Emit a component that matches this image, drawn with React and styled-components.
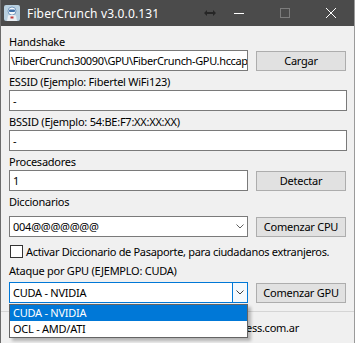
import React from 'react';
import styled, { createGlobalStyle, css } from 'styled-components';

const GlobalStyle = createGlobalStyle`
 html, body {
  margin: 0;
  padding: 0;
  background: #f0f0f0;
 }
 * { box-sizing: border-box; }
`

const Window = styled.div`
 width: 355px;
 height: 343px;
 overflow: hidden;
 background: #f0f0f0;
 border-left: 1px solid #6b6b6b;
 border-right: 1px solid #9a9a9a;
 display: flex;
 flex-direction: column;
 font-family: "Noto Sans", "Open Sans", sans-serif;
 font-size: 11px;
 letter-spacing: -0.25px;
 color: #000;
`

const TitleBar = styled.div`
 height: 26px;
 flex: none;
 background: #4b4b4b;
 display: flex;
 align-items: center;
 color: #fff;
 letter-spacing: 0;
`

const TitleIcon = styled.svg`
 width: 16px;
 height: 16px;
 margin: 0 7px 0 3px;
 flex: none;
`

const TitleText = styled.span`
 font-size: 12px;
 letter-spacing: 0.15px;
 flex: 1;
 white-space: nowrap;
`

const Resize = styled.svg`
 width: 12px;
 height: 8px;
 flex: none;
`

const CaptionButton = styled.div`
 width: 46px;
 height: 26px;
 flex: none;
 display: flex;
 align-items: center;
 justify-content: center;
`

const Body = styled.div`
 flex: 1;
 display: flex;
 flex-direction: column;
 padding: 9px 7px 0 8px;
`

const Group = styled.div`
 display: flex;
 flex-direction: column;
 margin-bottom: ${p => p.mb ?? 4}px;
`

const Label = styled.div`
 height: 15px;
 line-height: 14px;
 white-space: nowrap;
 margin-bottom: ${p => p.mb || 0}px;
`

const Row = styled.div`
 display: flex;
 align-items: center;
 gap: 8px;
 padding-right: ${p => (p.withButton ? 1 : 0)}px;
`

const TextBox = styled.div`
 flex: 1;
 min-width: 0;
 height: 21px;
 background: #fff;
 border: 1px solid #7a7a7a;
 padding: 0 3px;
 line-height: 19px;
 white-space: nowrap;
 overflow: hidden;
 ${p => p.scrolled && css`
  padding: 0 0 0 1px;
  letter-spacing: -0.36px;
 `}
`

const Button = styled.div`
 width: 90px;
 height: 20px;
 flex: none;
 background: #e1e1e1;
 border: 1px solid #adadad;
 display: flex;
 align-items: center;
 justify-content: center;
 white-space: nowrap;
`

const ComboWrap = styled.div`
 flex: 1;
 position: relative;
`

const Combo = styled.div`
 height: 21px;
 background: #fff;
 border: 1px solid ${p => (p.focused ? '#0078d7' : '#7a7a7a')};
 display: flex;
 align-items: stretch;
`

const ComboText = styled.div`
 flex: 1;
 padding: 0 3px;
 line-height: 19px;
 white-space: nowrap;
 overflow: hidden;
`

const ComboArrow = styled.div`
 width: 15px;
 display: flex;
 align-items: center;
 justify-content: center;
 ${p => p.focused && css`
  border-left: 1px solid #0078d7;
  background: #f4f9fd;
 `}
`

const DropList = styled.div`
 position: absolute;
 left: 0;
 right: 0;
 top: 22px;
 background: #fff;
 border: 1px solid #646464;
 box-shadow: 3px 3px 3px rgba(0, 0, 0, 0.25);
 z-index: 2;
`

const DropItem = styled.div`
 height: 16px;
 line-height: 16px;
 padding: 0 3px;
 white-space: nowrap;
 ${p => p.selected && css`
  background: #0078d7;
  color: #fff;
 `}
`

const CheckRow = styled.label`
 display: flex;
 align-items: center;
 gap: 3px;
 margin: 8px 0 6px 1px;
 height: 13px;
 white-space: nowrap;
 letter-spacing: -0.32px;
`

const CheckBox = styled.span`
 width: 13px;
 height: 13px;
 flex: none;
 background: #fff;
 border: 1px solid #333;
`

const Footer = styled.div`
 margin: 8px -7px 0 -8px;
 border-top: 1px solid #d5d5d5;
 flex: 1;
 display: flex;
 justify-content: flex-end;
 padding: 8px 55px 0 0;
 white-space: nowrap;
`

const Chevron = ({ color = '#606060' }) => (
 <svg width="8" height="5" viewBox="0 0 8 5">
  <polyline points="0.5,0.5 4,4 7.5,0.5" fill="none" stroke={color} strokeWidth="1" />
 </svg>
)

const App = () => {
 return (
  <>
   <GlobalStyle />
   <Window>
    <TitleBar>
     <TitleIcon viewBox="0 0 16 16">
      <rect x="0" y="0" width="16" height="16" rx="2" fill="#b8cfdf" />
      <circle cx="8" cy="6" r="4" fill="#f4f7fa" stroke="#5d86b3" strokeWidth="0.8" />
      <rect x="5" y="4.5" width="6" height="2.5" rx="1" fill="#3d6fa8" />
      <path d="M3 16 L4 10.5 Q8 9 12 10.5 L13 16 Z" fill="#e9eef3" />
      <rect x="6.5" y="11.5" width="3" height="2" fill="#c23b3b" />
     </TitleIcon>
     <TitleText>FiberCrunch v3.0.0.131</TitleText>
     <Resize viewBox="0 0 12 8">
      <path d="M0 4 L3 1 L3 3 L9 3 L9 1 L12 4 L9 7 L9 5 L3 5 L3 7 Z" fill="#262626" />
     </Resize>
     <CaptionButton>
      <svg width="10" height="10" viewBox="0 0 10 10"><line x1="0" y1="5.5" x2="10" y2="5.5" stroke="#fff" /></svg>
     </CaptionButton>
     <CaptionButton>
      <svg width="10" height="10" viewBox="0 0 10 10"><rect x="0.5" y="0.5" width="9" height="9" fill="none" stroke="#7c7c7c" /></svg>
     </CaptionButton>
     <CaptionButton>
      <svg width="10" height="10" viewBox="0 0 10 10"><path d="M0 0 L10 10 M10 0 L0 10" stroke="#fff" strokeWidth="1" /></svg>
     </CaptionButton>
    </TitleBar>
    <Body>
     <Group>
      <Label>Handshake</Label>
      <Row withButton>
       <TextBox scrolled>\FiberCrunch30090\GPU\FiberCrunch-GPU.hccap</TextBox>
       <Button>Cargar</Button>
      </Row>
     </Group>
     <Group>
      <Label>ESSID (Ejemplo: Fibertel WiFi123)</Label>
      <Row><TextBox>-</TextBox></Row>
     </Group>
     <Group>
      <Label>BSSID (Ejemplo: 54:BE:F7:XX:XX:XX)</Label>
      <Row><TextBox>-</TextBox></Row>
     </Group>
     <Group>
      <Label>Procesadores</Label>
      <Row withButton>
       <TextBox>1</TextBox>
       <Button>Detectar</Button>
      </Row>
     </Group>
     <Group mb={0}>
      <Label mb={6}>Diccionarios</Label>
      <Row withButton>
       <ComboWrap>
        <Combo>
         <ComboText>004@@@@@@@</ComboText>
         <ComboArrow><Chevron /></ComboArrow>
        </Combo>
       </ComboWrap>
       <Button>Comenzar CPU</Button>
      </Row>
     </Group>
     <CheckRow>
      <CheckBox />
      Activar Diccionario de Pasaporte, para ciudadanos extranjeros.
     </CheckRow>
     <Group mb={0}>
      <Label mb={3}>Ataque por GPU (EJEMPLO: CUDA)</Label>
      <Row withButton>
       <ComboWrap>
        <Combo focused>
         <ComboText>CUDA - NVIDIA</ComboText>
         <ComboArrow focused><Chevron color="#404040" /></ComboArrow>
        </Combo>
        <DropList>
         <DropItem selected>CUDA - NVIDIA</DropItem>
         <DropItem>OCL - AMD/ATI</DropItem>
        </DropList>
       </ComboWrap>
       <Button>Comenzar GPU</Button>
      </Row>
     </Group>
     <Footer>www.fibercrunch.wordpress.com.ar</Footer>
    </Body>
   </Window>
  </>
 )
}

export default App
